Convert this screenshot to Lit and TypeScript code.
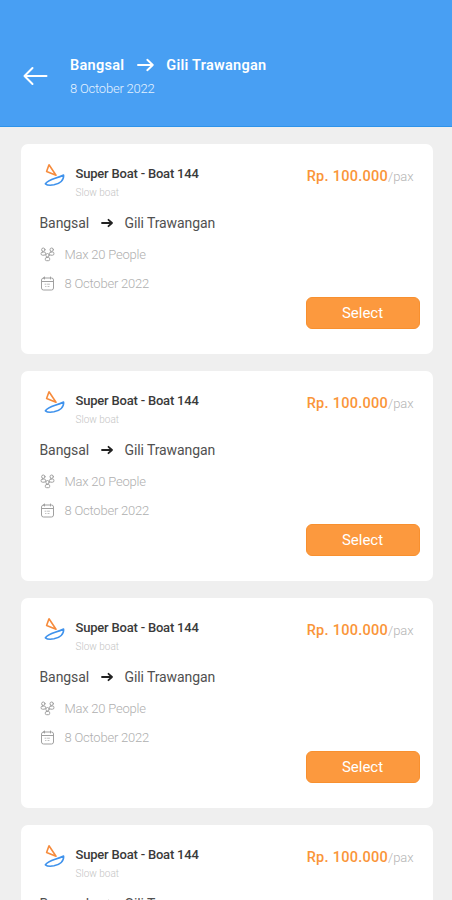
import { LitElement, html, css, svg } from "lit";
import { customElement, property } from "lit/decorators.js";

interface Trip {
  boat: string;
  kind: string;
  from: string;
  to: string;
  capacity: string;
  date: string;
  price: string;
}

const trip: Trip = {
  boat: "Super Boat - Boat 144",
  kind: "Slow boat",
  from: "Bangsal",
  to: "Gili Trawangan",
  capacity: "Max 20 People",
  date: "8 October 2022",
  price: "Rp. 100.000",
};

const person = (x: number, y: number) => svg`
  <circle cx=${x} cy=${y} r="1.7"></circle>
  <rect x=${x - 2.2} y=${y + 2.3} width="4.4" height="3.2" rx="1.3"></rect>`;

@customElement("trip-card")
export class TripCard extends LitElement {
  @property({ attribute: false }) trip!: Trip;

  static styles = css`
    :host {
      box-sizing: border-box;
      height: 209.5px;
      padding: 16px 13px 25px 19px;
      border-radius: 7px;
      background: #fff;
      display: flex;
      flex-direction: column;
    }
    svg { display: block; flex: none; fill: none; stroke-linecap: round; stroke-linejoin: round; }
    .top { display: flex; height: 42px; }
    .boat { width: 24px; height: 26px; margin: 2px 10px 0 2px; }
    .names { flex: 1; }
    .name { font-size: 13px; line-height: 16px; margin-top: 6px; font-weight: 500; color: #3a3a3a; letter-spacing: -0.2px; }
    .kind { font-size: 10px; line-height: 12px; margin-top: 5px; font-weight: 300; color: #c4c4c4; }
    .price { padding-right: 6px; margin-top: 8px; line-height: 18px; font-size: 14.5px; font-weight: 500; color: #fa9539; letter-spacing: 0.27px; }
    .unit { font-size: 13px; font-weight: 300; color: #b4b4b4; letter-spacing: -0.05px; }
    .route { display: flex; align-items: center; height: 18px; margin-top: 11.5px; font-size: 14px; color: #505050; letter-spacing: -0.1px; }
    .arrow { width: 12px; height: 10px; margin: 0 11px 0 12.5px; stroke: #222; stroke-width: 1.8; }
    .fact { display: flex; align-items: center; height: 18px; font-size: 13px; font-weight: 300; color: #afafaf; letter-spacing: -0.22px; }
    .fact svg { width: 15px; height: 15px; margin-right: 10px; stroke: #a0a0a0; stroke-width: 1; }
    .capacity { margin-top: 13.5px; }
    .date { margin-top: 11px; }
    .select {
      align-self: flex-end; width: 114px; height: 32px; margin-top: auto; padding: 0;
      border: 1px solid #f8902f; border-radius: 6px; background: #fc993e; color: #fff;
      font: 400 15px Roboto, sans-serif; box-sizing: border-box;
    }
  `;

  render() {
    const t = this.trip;
    return html`
      <div class="top">
        <svg class="boat" viewBox="0 0 24 26" stroke-width="1.6">
          <path stroke="#f68b3c" d="M7 2.8 4.6 9.6 14 13.2Z"></path>
          <path stroke="#3f92ec" d="M3.4 21.8C7 16.8 14 17 21.6 13 22 18 18 21.6 12 22.8 8 23.5 5 23.2 3.4 21.8Z"></path>
        </svg>
        <div class="names">
          <div class="name">${t.boat}</div>
          <div class="kind">${t.kind}</div>
        </div>
        <div class="price">${t.price}<span class="unit">/pax</span></div>
      </div>
      <div class="route">
        <span class="from">${t.from}</span>
        <svg class="arrow" viewBox="0 0 12 10"><path d="M1 5h10M7.5 1.8 11 5 7.5 8.2"></path></svg>
        <span class="to">${t.to}</span>
      </div>
      <div class="fact capacity">
        <svg viewBox="0 0 15 15">${person(3.3, 2.7)}${person(11.7, 2.7)}${person(7.5, 8.2)}</svg>
        <span>${t.capacity}</span>
      </div>
      <div class="fact date">
        <svg viewBox="0 0 15 15">
          <rect x="1.5" y="2" width="12" height="12" rx="2"></rect>
          <path d="M1.5 5.5h12M4.5 1v2M10.5 1v2"></path>
          <path stroke-width=".7" d="M5 8.2h1M7.5 8.2h2M5.5 10.5h.5M8 10.5h1"></path>
        </svg>
        <span>${t.date}</span>
      </div>
      <button class="select">Select</button>
    `;
  }
}

@customElement("app-root")
export class AppRoot extends LitElement {
  static styles = css`
    :host { display: block; height: 900px; overflow: hidden; background: #efefef; font-family: Roboto, sans-serif; }
    svg { display: block; flex: none; fill: none; stroke: #fff; stroke-linecap: round; stroke-linejoin: round; }
    header {
      box-sizing: border-box; height: 127px; padding: 54px 0 0 23px; display: flex;
      background: #489ff3; border-bottom: 1px solid #2e93ea; color: #fff;
    }
    .back { width: 25px; height: 20px; margin: 12px 22px 0 0; stroke-width: 2; }
    .route { display: flex; align-items: center; height: 22px; font-size: 14.5px; font-weight: 600; letter-spacing: 0.27px; }
    .arrow { width: 17px; height: 14px; margin: 0 12px 0 13px; stroke-width: 1.9; }
    .date { margin-top: 4px; line-height: 18px; font-size: 13px; font-weight: 300; color: #e3f1ff; letter-spacing: -0.22px; }
    main { display: flex; flex-direction: column; gap: 17.5px; padding: 17.3px 19.5px 0 20.5px; }
  `;

  render() {
    return html`
      <header>
        <svg class="back" viewBox="0 0 25 20"><path d="M1.5 10h22M9.5 2 1.5 10l8 8"></path></svg>
        <div>
          <div class="route">
            <span class="from">${trip.from}</span>
            <svg class="arrow" viewBox="0 0 17 14"><path d="M1 7h14.8M10.3 1.8 15.8 7l-5.5 5.2"></path></svg>
            <span class="to">${trip.to}</span>
          </div>
          <div class="date">${trip.date}</div>
        </div>
      </header>
      <main>${[trip, trip, trip, trip].map((t) => html`<trip-card .trip=${t}></trip-card>`)}</main>
    `;
  }
}
